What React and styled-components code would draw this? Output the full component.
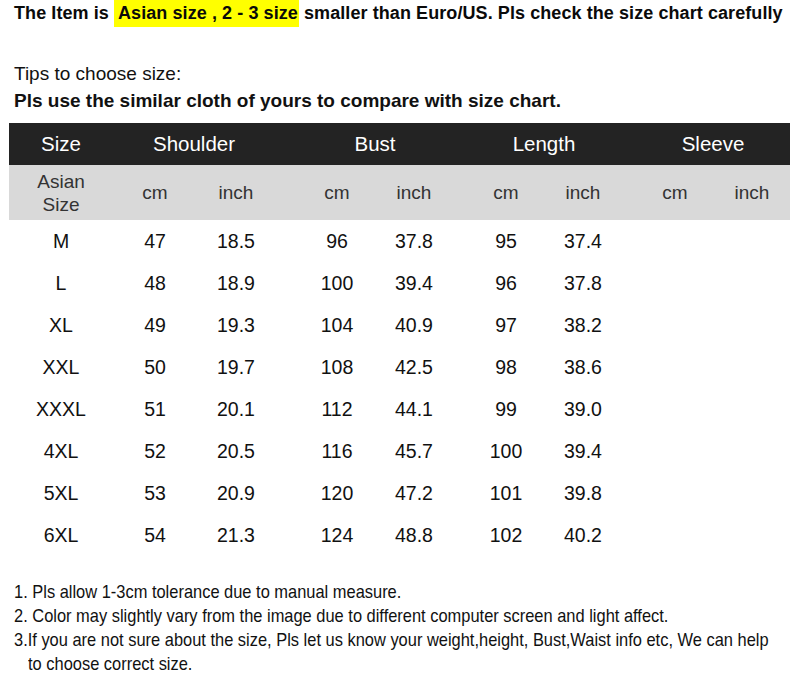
import React from "react";
import styled, { createGlobalStyle } from "styled-components";

const Global = createGlobalStyle`
  html, body { margin: 0; padding: 0; background: #fff; }
  body { font-family: "Liberation Sans", Arial, sans-serif; color: #000; }
`;

const Page = styled.div`
  width: 800px;
  height: 678px;
  overflow: hidden;
  background: #fff;
`;

const Title = styled.div`
  padding-left: 14px;
  font-size: 18px;
  font-weight: bold;
  line-height: 27px;
  letter-spacing: 0.08px;
  white-space: nowrap;
  color: #0a0a0a;
`;

const Mark = styled.span`
  background: #ffff00;
  padding: 0 1px 0 4px;
  display: inline-block;
`;

const Tips = styled.div`
  margin-top: 33px;
  padding-left: 14px;
`;

const TipLine = styled.div`
  font-size: 19px;
  line-height: 27px;
  font-weight: ${(p) => (p.$bold ? "bold" : "normal")};
  color: #111;
  white-space: nowrap;
`;

const COLS = "104px 84px 78px 23px 78px 76px 15px 78px 76px 15px 78px 76px";

const Table = styled.div`
  margin: 9px 0 0 9px;
  width: 781px;
`;

const Row = styled.div`
  display: grid;
  grid-template-columns: ${COLS};
  height: ${(p) => p.$h}px;
  background: ${(p) => p.$bg || "#fff"};
  color: ${(p) => p.$color || "#111"};
  font-size: ${(p) => p.$fs || 19.5}px;
`;

const Cell = styled.div`
  display: flex;
  align-items: center;
  justify-content: center;
  text-align: center;
  grid-column: ${(p) => p.$span || "auto"};
  line-height: ${(p) => p.$lh || "normal"};
  white-space: nowrap;
`;

const Notes = styled.div`
  margin-top: 24px;
  padding-left: 14px;
  font-size: 19px;
  line-height: 24px;
  color: #111;
`;

const Note = styled.div`
  padding-left: ${(p) => (p.$indent ? "14px" : "0")};
  white-space: nowrap;
  transform: scaleX(0.865);
  transform-origin: ${(p) => (p.$indent ? "14px" : "0")} 50%;
`;

const data = [
  ["M", 47, "18.5", 96, "37.8", 95, "37.4"],
  ["L", 48, "18.9", 100, "39.4", 96, "37.8"],
  ["XL", 49, "19.3", 104, "40.9", 97, "38.2"],
  ["XXL", 50, "19.7", 108, "42.5", 98, "38.6"],
  ["XXXL", 51, "20.1", 112, "44.1", 99, "39.0"],
  ["4XL", 52, "20.5", 116, "45.7", 100, "39.4"],
  ["5XL", 53, "20.9", 120, "47.2", 101, "39.8"],
  ["6XL", 54, "21.3", 124, "48.8", 102, "40.2"],
];

export default function App() {
  return (
    <Page>
      <Global />
      <Title>
        The Item is <Mark>Asian size , 2 - 3 size</Mark> smaller than Euro/US. Pls check the size chart carefully
      </Title>
      <Tips>
        <TipLine>Tips to choose size:</TipLine>
        <TipLine $bold>Pls use the similar cloth of yours to compare with size chart.</TipLine>
      </Tips>
      <Table>
        <Row $h={42} $bg="#232323" $color="#fff" $fs={20.5}>
          <Cell>Size</Cell>
          <Cell $span="span 2">Shoulder</Cell>
          <Cell />
          <Cell $span="span 2">Bust</Cell>
          <Cell />
          <Cell $span="span 2">Length</Cell>
          <Cell />
          <Cell $span="span 2">Sleeve</Cell>
        </Row>
        <Row $h={55} $bg="#d9d9d9" $color="#333" $fs={19}>
          <Cell $lh="23px">
            Asian
            <br />
            Size
          </Cell>
          <Cell>cm</Cell>
          <Cell>inch</Cell>
          <Cell />
          <Cell>cm</Cell>
          <Cell>inch</Cell>
          <Cell />
          <Cell>cm</Cell>
          <Cell>inch</Cell>
          <Cell />
          <Cell>cm</Cell>
          <Cell>inch</Cell>
        </Row>
        {data.map((r) => (
          <Row key={r[0]} $h={42}>
            <Cell>{r[0]}</Cell>
            <Cell>{r[1]}</Cell>
            <Cell>{r[2]}</Cell>
            <Cell />
            <Cell>{r[3]}</Cell>
            <Cell>{r[4]}</Cell>
            <Cell />
            <Cell>{r[5]}</Cell>
            <Cell>{r[6]}</Cell>
            <Cell />
            <Cell />
            <Cell />
          </Row>
        ))}
      </Table>
      <Notes>
        <Note>1. Pls allow 1-3cm tolerance due to manual measure.</Note>
        <Note>2. Color may slightly vary from the image due to different computer screen and light affect.</Note>
        <Note>3.If you are not sure about the size, Pls let us know your weight,height, Bust,Waist info etc, We can help</Note>
        <Note $indent>to choose correct size.</Note>
      </Notes>
    </Page>
  );
}
